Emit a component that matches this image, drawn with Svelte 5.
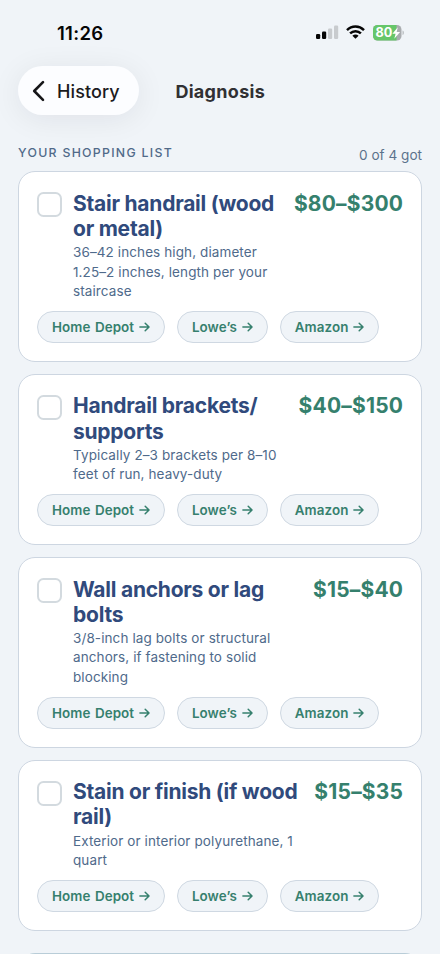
<script>
  const items = [
    { title: ['Stair handrail (wood', 'or metal)'], price: '$80–$300', note: ['36–42 inches high, diameter', '1.25–2 inches, length per your', 'staircase'] },
    { title: ['Handrail brackets/', 'supports'], price: '$40–$150', note: ['Typically 2–3 brackets per 8–10', 'feet of run, heavy-duty'] },
    { title: ['Wall anchors or lag', 'bolts'], price: '$15–$40', note: ['3/8-inch lag bolts or structural', 'anchors, if fastening to solid', 'blocking'] },
    { title: ['Stain or finish (if wood', 'rail)'], price: '$15–$35', note: ['Exterior or interior polyurethane, 1', 'quart'] }
  ];
  const stores = ['Home Depot', 'Lowe’s', 'Amazon'];
</script>

<main>
  <div class="status">
    <span class="time">11:26</span>
    <div class="indicators">
      <svg class="signal" width="23" height="14" viewBox="0 0 23 14">
        <rect x="0" y="9" width="4.2" height="5" rx="1.2" fill="#050505" />
        <rect x="6" y="6.6" width="4.2" height="7.4" rx="1.2" fill="#050505" />
        <rect x="12" y="3.6" width="4.2" height="10.4" rx="1.2" fill="#c8cbce" />
        <rect x="18" y="0.5" width="4.2" height="13.5" rx="1.2" fill="#c8cbce" />
      </svg>
      <svg class="wifi" width="19" height="14" viewBox="0 0 19 14">
        <g fill="none" stroke="#050505" stroke-width="2.5">
          <path d="M1 5.1C5.8.4 13.2.4 18 5.1" />
          <path d="M4.1 8.4c3.1-3 7.7-3 10.8 0" />
        </g>
        <path d="M6.4 10.7c1.8-1.6 4.4-1.6 6.2 0L9.5 13.8z" fill="#050505" />
      </svg>
      <svg class="battery" width="32" height="16" viewBox="0 0 32 16">
        <defs><clipPath id="cell"><rect width="28.5" height="15.5" rx="4.6" /></clipPath></defs>
        <g clip-path="url(#cell)">
          <rect width="29" height="16" fill="#a9acaf" />
          <rect width="23.5" height="16" fill="#66c66a" />
        </g>
        <path d="M29.6 5.4c1.5.5 1.5 4.2 0 4.7z" fill="#a9acaf" />
        <text x="2.6" y="12.2" textLength="16.8" lengthAdjust="spacingAndGlyphs">80</text>
        <path d="M24.8 2.2 19.4 8.7h3.2l-1.3 5 5.8-6.8h-3.4z" fill="#fff" />
      </svg>
    </div>
  </div>

  <header>
    <button class="back">
      <svg width="13" height="22" viewBox="0 0 13 22"><path d="M11 2.2 2.2 11 11 19.8" /></svg>
      <span>History</span>
    </button>
    <h1>Diagnosis</h1>
  </header>

  <div class="section">
    <h2>YOUR SHOPPING LIST</h2>
    <span class="count">0 of 4 got</span>
  </div>

  <div class="list">
    {#each items as item}
      <article>
        <div class="top">
          <span class="check"></span>
          <div class="body">
            <h3>{#each item.title as line}<span>{line}</span>{/each}</h3>
            <p>{#each item.note as line}<span>{line}</span>{/each}</p>
          </div>
          <strong>{item.price}</strong>
        </div>
        <div class="stores">
          {#each stores as store}
            <button class="store">
              <span>{store}</span>
              <svg width="11" height="12" viewBox="0 0 11 12"><path d="M.9 6h9M6.2 2.2 10 6 6.2 9.8" /></svg>
            </button>
          {/each}
        </div>
      </article>
    {/each}
    <article class="next"></article>
  </div>
</main>

<style>
  :global(body) { background: #f0f4f8; }
  main {
    width: 440px;
    height: 954px;
    overflow: hidden;
    box-sizing: border-box;
    background: #f0f4f8;
    font-family: Inter, "Liberation Sans", sans-serif;
    display: flex;
    flex-direction: column;
  }
  h1, h2, h3, p { margin: 0; }
  button { font: inherit; margin: 0; box-sizing: border-box; }
  svg { display: block; flex: none; }
  .status {
    height: 65.6px;
    box-sizing: border-box;
    padding: 22px 35.5px 0 57px;
    display: flex;
    justify-content: space-between;
    align-items: flex-start;
    flex: none;
  }
  .time { font-size: 18.5px; line-height: 22px; font-weight: 600; letter-spacing: 0.3px; color: #050505; }
  .indicators { display: flex; padding-top: 2.9px; }
  .wifi { margin: 0 0 0 7px; }
  .battery { margin-left: 8px; }
  .battery text { font-family: Inter, sans-serif; font-size: 12.5px; font-weight: 700; fill: #fff; }
  header { display: flex; align-items: center; height: 50px; padding-left: 18px; flex: none; }
  .back {
    width: 121px;
    height: 49px;
    border: 0;
    border-radius: 25px;
    background: #fcfdff;
    box-shadow: 0 4px 30px rgba(30, 20, 40, 0.075);
    padding: 0 0 0 14px;
    display: flex;
    align-items: center;
    font-size: 18px;
    font-weight: 500;
    letter-spacing: 0.1px;
    color: #1b1b1d;
  }
  .back span { margin-left: 12px; padding-top: 1px; }
  .back path { fill: none; stroke: #161618; stroke-width: 2.6; stroke-linecap: round; stroke-linejoin: round; }
  h1 { margin-left: 36.4px; padding-top: 1px; font-size: 18px; font-weight: 700; letter-spacing: 0.3px; color: #303033; }
  .section {
    height: 55.6px;
    box-sizing: border-box;
    padding: 29px 18px 0;
    display: flex;
    justify-content: space-between;
    flex: none;
    color: #506a89;
  }
  h2 { font-size: 12.3px; line-height: 16px; font-weight: 550; letter-spacing: 1.3px; }
  .count { font-size: 13.6px; line-height: 20px; color: #5b728c; }
  .list { display: flex; flex-direction: column; gap: 12px; padding: 0 18px; }
  article {
    box-sizing: border-box;
    border: 1px solid #cdd6e1;
    border-radius: 17px;
    background: #fff;
    padding: 18.6px 18px 17.85px;
    flex: none;
  }
  .next { height: 60px; margin-top: 10px; border-color: #b9cdd8; background: #edf3f6; }
  .top { display: flex; align-items: flex-start; }
  .check { box-sizing: border-box; width: 25px; height: 25px; margin-top: 1.7px; border: 2px solid #d3dadf; border-radius: 6.5px; flex: none; }
  .body { margin-left: 11px; flex: 1; min-width: 0; }
  h3 { font-size: 21px; line-height: 25.3px; font-weight: 700; letter-spacing: -0.24px; color: #304a7c; white-space: nowrap; }
  h3 span, p span { display: block; }
  p { margin-top: 2px; font-size: 13.5px; line-height: 19.15px; letter-spacing: 0.1px; color: #4f6a8b; white-space: nowrap; }
  strong { font-size: 21px; line-height: 25.3px; font-weight: 700; letter-spacing: 0.2px; margin-right: -0.2px; color: #35806d; white-space: nowrap; }
  .stores { display: flex; gap: 11.9px; margin-top: 10px; }
  .store {
    height: 32px;
    border: 1px solid #cfd8e2;
    border-radius: 16px;
    background: #f0f4f8;
    padding: 0 14px 0 13.9px;
    display: flex;
    align-items: center;
    gap: 4.9px;
    font-size: 13.4px;
    font-weight: 600;
    letter-spacing: 0.1px;
    word-spacing: 1px;
    color: #36806e;
  }
  .store path { fill: none; stroke: #36806e; stroke-width: 1.5; stroke-linecap: round; stroke-linejoin: round; }
</style>
